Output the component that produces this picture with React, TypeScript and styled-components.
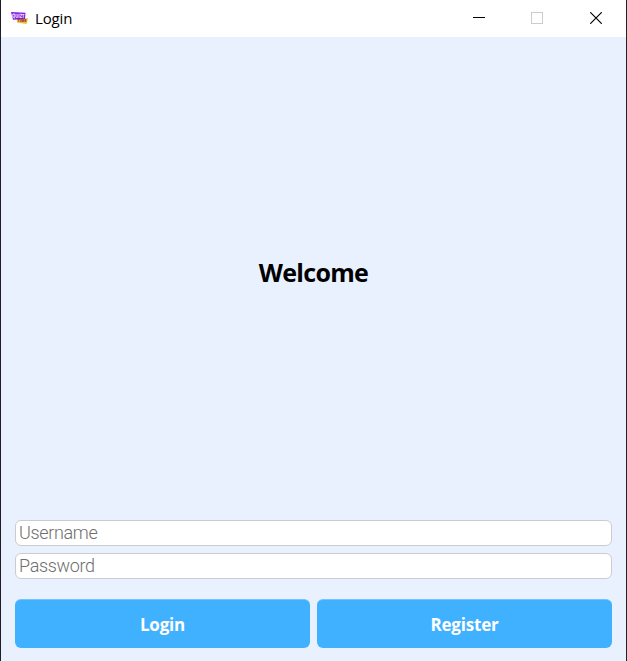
import React from 'react';
import styled, { createGlobalStyle } from 'styled-components';

const GlobalStyle = createGlobalStyle`
  * { box-sizing: border-box; }
  html, body { margin: 0; padding: 0; overflow: hidden; }
`;

const Window = styled.div`
  width: 627px;
  height: 661px;
  display: flex;
  flex-direction: column;
  border-left: 1px solid #211d26;
  border-right: 1px solid #1c2226;
  background: #e9f1ff;
  font-family: 'Open Sans', 'Noto Sans', sans-serif;
  color: #000;
`;

const TitleBar = styled.header`
  height: 37px;
  flex: none;
  display: flex;
  align-items: center;
  background: #fff;
  padding: 0 1px 1px 10px;
`;

const TitleText = styled.span`
  flex: 1;
  margin-left: 7px;
  font-size: 15px;
  line-height: 20px;
  letter-spacing: -0.15px;
`;

const WindowButton = styled.button<{ $muted?: boolean }>`
  width: 58.5px;
  height: 36px;
  padding: 0;
  border: 0;
  background: none;
  display: flex;
  align-items: center;
  justify-content: center;
  color: ${(p) => (p.$muted ? '#cccccc' : '#000')};
`;

const Content = styled.form`
  flex: 1;
  display: flex;
  flex-direction: column;
  padding: 0 14px 13px;
`;

const Heading = styled.h1`
  flex: 1;
  margin: 0;
  display: flex;
  align-items: center;
  justify-content: center;
  padding-bottom: 13px;
  font-size: 25px;
  font-weight: 700;
  line-height: 34px;
  letter-spacing: -0.7px;
`;

const Fields = styled.div`
  display: flex;
  flex-direction: column;
  gap: 7px;
  margin-bottom: 20px;
`;

const Field = styled.input`
  width: 100%;
  height: 26px;
  padding: 0 3px 2px;
  border: 1px solid #cbcccf;
  border-radius: 6px;
  background: #fff;
  font-family: Roboto, sans-serif;
  font-size: 18px;
  font-weight: 300;
  letter-spacing: -0.35px;
  outline: none;
  &::placeholder { color: #6e6e6e; opacity: 1; }
`;

const Actions = styled.div`
  display: grid;
  grid-template-columns: 1fr 1fr;
  gap: 7px;
`;

const ActionButton = styled.button`
  height: 49px;
  padding: 0;
  border: 0;
  border-top: 1px solid #73c4fe;
  border-radius: 6px;
  background: #3fb1ff;
  color: #fff;
  font-family: inherit;
  font-size: 17px;
  font-weight: 700;
  letter-spacing: -0.2px;
`;

const AppIcon = () => (
  <svg width="17" height="14" viewBox="0 0 17 14">
    <path d="M6 7.5 17 7.2 15.5 13 6 11.5Z" fill="#f9b938" />
    <path d="M0 1 14.5 1.8 14 8 2 8.8Z" fill="#8519df" />
    <text x="1" y="6.8" fontFamily="Open Sans" fontSize="5.5" fontWeight="700" fill="#fff" textLength="12.5" lengthAdjust="spacingAndGlyphs" transform="rotate(2 7 5)">QUIZT</text>
    <text x="6.5" y="11.3" fontFamily="Open Sans" fontSize="4" fontWeight="700" fill="#713526" textLength="9" lengthAdjust="spacingAndGlyphs">TIME</text>
  </svg>
);

export default function App() {
  return (
    <>
      <GlobalStyle />
      <Window>
        <TitleBar>
          <AppIcon />
          <TitleText>Login</TitleText>
          <WindowButton aria-label="Minimize">
            <svg width="12" height="12" shapeRendering="crispEdges"><path d="M0 5h12v1H0z" fill="currentColor" /></svg>
          </WindowButton>
          <WindowButton aria-label="Maximize" $muted disabled>
            <svg width="12" height="12" shapeRendering="crispEdges"><rect x=".5" y=".5" width="11" height="11" fill="none" stroke="currentColor" /></svg>
          </WindowButton>
          <WindowButton aria-label="Close">
            <svg width="12" height="12"><path d="M.2.2 11.8 11.8M11.8.2.2 11.8" stroke="currentColor" strokeWidth="1.15" /></svg>
          </WindowButton>
        </TitleBar>
        <Content onSubmit={(e) => e.preventDefault()}>
          <Heading>Welcome</Heading>
          <Fields>
            <Field placeholder="Username" />
            <Field placeholder="Password" type="password" />
          </Fields>
          <Actions>
            <ActionButton type="submit">Login</ActionButton>
            <ActionButton type="button">Register</ActionButton>
          </Actions>
        </Content>
      </Window>
    </>
  );
}
